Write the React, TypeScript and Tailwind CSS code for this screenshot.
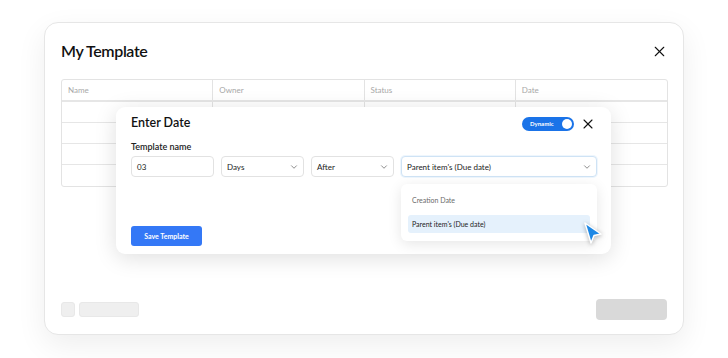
import { X, ChevronDown } from 'lucide-react';

const font = { fontFamily: '"Lato", "Inter", sans-serif' };

function Select({ label, width, active }: { label: string; width: string; active?: boolean }) {
  return (
    <div
      className={`${width} h-[21px] flex items-center justify-between pl-[5px] pr-[4px] rounded-[4px] border ${
        active ? 'border-[#cfe3f5] shadow-[0_0_0_1px_#eef6fd]' : 'border-[#e2e2e2]'
      } bg-white`}
    >
      <span className="text-[8px] text-[#222] leading-none">{label}</span>
      <ChevronDown className="w-[10px] h-[10px] text-[#555]" strokeWidth={1.6} />
    </div>
  );
}

export default function App() {
  const cols = ['Name', 'Owner', 'Status', 'Date'];
  const rows = [0, 1, 2, 3];

  return (
    <div className="w-[728px] h-[358px] bg-white pt-[22px] pl-[44px]" style={font}>
      <div className="relative w-[640px] h-[313px] bg-white rounded-[14px] border border-[#e6e6e6] shadow-[0_10px_30px_rgba(0,0,0,0.07)] flex flex-col px-[16px] pt-[16px] pb-[14px]">
        {/* header */}
        <div className="flex items-center justify-between h-[24px]">
          <h1 className="text-[16px] font-semibold text-[#111] tracking-tight">My Template</h1>
          <X className="w-[17px] h-[17px] text-[#111] -mr-[1px]" strokeWidth={1.5} />
        </div>

        {/* table */}
        <div className="mt-[16px] w-[607px] border border-[#e3e3e3] rounded-[3px] overflow-hidden">
          <div className="grid grid-cols-4 h-[22px] border-b-2 border-[#e6e6e6]">
            {cols.map((c, i) => (
              <div
                key={c}
                className={`flex items-center pl-[6px] text-[8px] text-[#a8a8a8] ${i < 3 ? 'border-r border-[#e3e3e3]' : ''}`}
              >
                {c}
              </div>
            ))}
          </div>
          {rows.map((r) => (
            <div key={r} className={`grid grid-cols-4 h-[21px] ${r < 3 ? 'border-b border-[#e6e6e6]' : ''}`}>
              {cols.map((c, i) => (
                <div key={c} className={i < 3 ? 'border-r border-[#e3e3e3]' : ''} />
              ))}
            </div>
          ))}
        </div>

        {/* footer placeholders */}
        <div className="mt-auto flex items-end justify-between">
          <div className="flex gap-[4px] mb-[3px]">
            <div className="w-[14px] h-[15px] rounded-[3px] bg-[#efefef] border border-[#e8e8e8]" />
            <div className="w-[60px] h-[15px] rounded-[3px] bg-[#efefef] border border-[#e8e8e8]" />
          </div>
          <div className="w-[71px] h-[21px] rounded-[4px] bg-[#d9d9d9]" />
        </div>

        {/* Enter Date modal */}
        <div className="absolute left-[71px] top-[84px] w-[495px] h-[147px] bg-white rounded-[9px] shadow-[0_4px_22px_rgba(0,0,0,0.13)] pl-[15px] pr-[14px] pt-[9px]">
          <div className="flex items-center justify-between h-[15px]">
            <h2 className="text-[12.5px] font-semibold text-[#111]">Enter Date</h2>
            <div className="flex items-center gap-[6px] mr-[1px]">
              <div className="w-[52px] h-[14px] rounded-full bg-[#1a73e8] flex items-center justify-between pl-[8px] pr-[2px]">
                <span className="text-[6px] font-bold text-white leading-none">Dynamic</span>
                <span className="w-[10px] h-[10px] rounded-full bg-white" />
              </div>
              <X className="w-[16px] h-[16px] text-[#111]" strokeWidth={1.6} />
            </div>
          </div>

          <div className="mt-[11px] text-[9px] font-semibold text-[#222] leading-none">Template name</div>

          <div className="mt-[5px] flex gap-[7px]">
            <div className="w-[83px] h-[21px] flex items-center pl-[5px] rounded-[4px] border border-[#e2e2e2] text-[8px] text-[#222]">
              03
            </div>
            <Select label="Days" width="w-[83px]" />
            <Select label="After" width="w-[83px]" />
            <Select label="Parent item's (Due date)" width="w-[196px]" active />
          </div>

          <button className="mt-[49px] w-[71px] h-[20px] rounded-[3px] bg-[#3478f6] text-white text-[7px] font-bold">
            Save Template
          </button>

          {/* dropdown */}
          <div className="absolute left-[285px] top-[77px] w-[196px] h-[57px] bg-white rounded-[6px] shadow-[0_3px_14px_rgba(0,0,0,0.1)] px-[7px] pt-[7px]">
            <div className="h-[18px] flex items-center pl-[4px] text-[7px] text-[#6b6b6b]">Creation Date</div>
            <div className="mt-[6px] h-[18px] flex items-center pl-[4px] rounded-[3px] bg-[#e5f1fc] text-[7px] text-[#222]">
              Parent item's (Due date)
            </div>
          </div>

          {/* cursor */}
          <svg
            className="absolute left-[466px] top-[114px] w-[22px] h-[26px] drop-shadow-[0_1px_2px_rgba(0,0,0,0.3)]"
            viewBox="0 0 22 26"
          >
            <path d="M3 2 L19 13 L12 14.5 L9 22 Z" fill="#1e88e5" stroke="white" strokeWidth="1.5" strokeLinejoin="round" />
          </svg>
        </div>
      </div>
    </div>
  );
}
